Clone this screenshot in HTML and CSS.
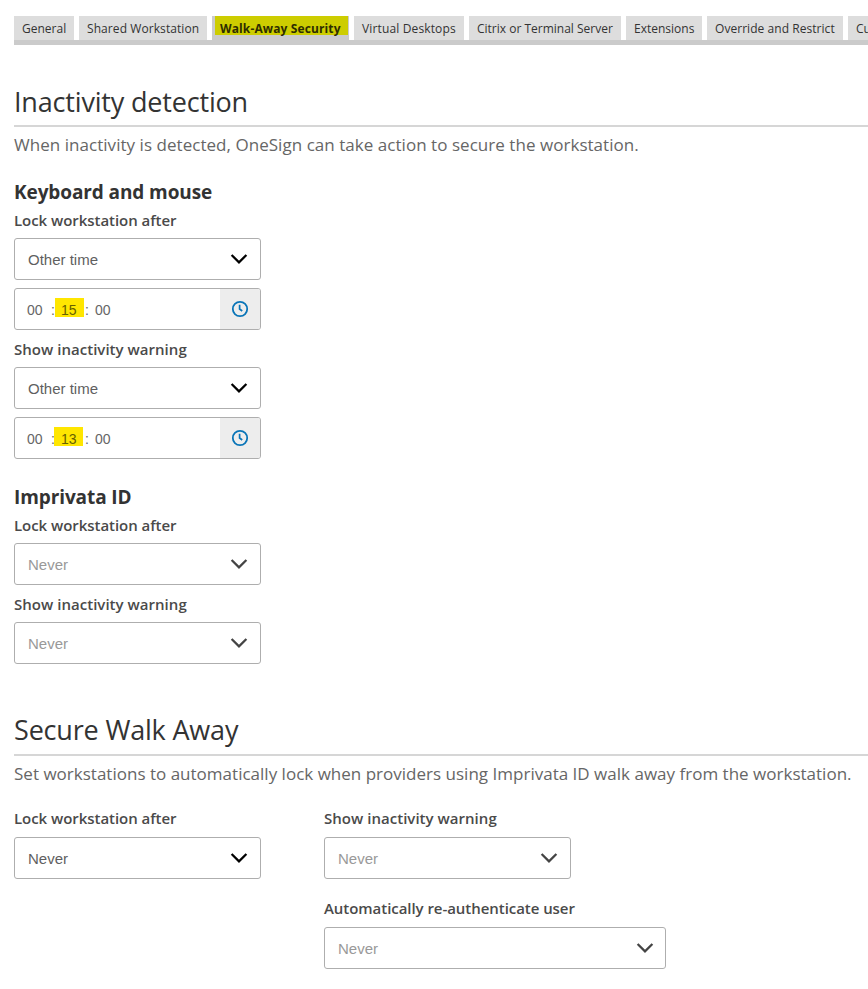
FILE: index.html
```html
<!DOCTYPE html>
<html lang="en">
<head>
<meta charset="utf-8">
<title>Walk-Away Security</title>
<link rel="stylesheet" href="styles.css">
</head>
<body>
<svg class="defs" aria-hidden="true">
  <symbol id="chevron" viewBox="0 0 18 12"><path d="M1.6 2 9 9.4 16.4 2" fill="none" stroke="currentColor" stroke-width="2.3"/></symbol>
  <symbol id="clock" viewBox="0 0 18 18"><circle cx="9" cy="9" r="7.2" fill="none" stroke="currentColor" stroke-width="1.8"/><path d="M8.6 4.8V9l2.6 2" fill="none" stroke="currentColor" stroke-width="1.7"/></symbol>
</svg>
<nav class="tabs">
  <a class="tab general"><span>General</span></a>
  <a class="tab shared"><span>Shared Workstation</span></a>
  <a class="tab active"><span>Walk-Away Security</span></a>
  <a class="tab virtual"><span>Virtual Desktops</span></a>
  <a class="tab citrix"><span>Citrix or Terminal Server</span></a>
  <a class="tab extensions"><span>Extensions</span></a>
  <a class="tab override"><span>Override and Restrict</span></a>
  <a class="tab custom"><span>Customization</span></a>
</nav>
<main>
  <section class="inactivity">
    <h2><span>Inactivity detection</span></h2>
    <p class="intro"><span>When inactivity is detected, OneSign can take action to secure the workstation.</span></p>
    <div class="group">
      <h3><span>Keyboard and mouse</span></h3>
      <label><span>Lock workstation after</span></label>
      <div class="select">Other time<svg class="chevron"><use href="#chevron"/></svg></div>
      <div class="time"><div class="digits"><span class="hh">00</span><span class="sep">:</span><span class="mark">15</span><span class="sep2">:</span><span>00</span></div><div class="addon"><svg class="clock"><use href="#clock"/></svg></div></div>
      <label class="next"><span class="show">Show inactivity warning</span></label>
      <div class="select">Other time<svg class="chevron"><use href="#chevron"/></svg></div>
      <div class="time"><div class="digits"><span class="hh">00</span><span class="sep">:</span><span class="mark early">13</span><span class="sep2">:</span><span>00</span></div><div class="addon"><svg class="clock"><use href="#clock"/></svg></div></div>
    </div>
    <div class="group imprivata">
      <h3><span>Imprivata ID</span></h3>
      <label><span>Lock workstation after</span></label>
      <div class="select disabled">Never<svg class="chevron"><use href="#chevron"/></svg></div>
      <label class="next"><span class="show">Show inactivity warning</span></label>
      <div class="select disabled">Never<svg class="chevron"><use href="#chevron"/></svg></div>
    </div>
  </section>
  <section class="walkaway">
    <h2><span>Secure Walk Away</span></h2>
    <p><span>Set workstations to automatically lock when providers using Imprivata ID walk away from the workstation.</span></p>
    <div class="columns">
      <div>
        <label class="spaced"><span>Lock workstation after</span></label>
        <div class="select">Never<svg class="chevron"><use href="#chevron"/></svg></div>
      </div>
      <div>
        <label class="spaced"><span class="show">Show inactivity warning</span></label>
        <div class="select disabled">Never<svg class="chevron"><use href="#chevron"/></svg></div>
        <label class="reauth"><span>Automatically re-authenticate user</span></label>
        <div class="select disabled wide">Never<svg class="chevron"><use href="#chevron"/></svg></div>
      </div>
    </div>
  </section>
</main>
</body>
</html>
```
FILE: styles.css
```css
* { box-sizing: border-box; }
body { margin: 0; padding-top: 16px; height: 989px; overflow: hidden; background: #fff; color: #333; font-family: "Open Sans", "Noto Sans", sans-serif; }
.defs { display: none; }
.tabs { display: flex; gap: 5px; margin-left: 14px; height: 29px; border-bottom: 5px solid #cbcbcb; overflow: hidden; }
.tab { flex: none; height: 24px; padding-left: 8px; background: #ddd; color: #333; font-size: 12px; line-height: 25px; white-space: nowrap; }
.general { width: 60px; }
.shared { width: 128px; letter-spacing: 0.08px; }
.active { width: 137px; padding-left: 3px; background: #cbcbcb; color: #2d2d00; font-weight: 700; letter-spacing: 0.12px; }
.active span { display: block; width: 133px; height: 19px; padding-left: 5px; background: #cdcd00; }
.virtual { width: 110px; letter-spacing: 0.14px; }
.citrix { width: 152px; }
.extensions { width: 76px; }
.override { width: 136px; letter-spacing: 0.05px; }
.custom { width: 100px; }
main { margin-left: 14px; }
h2, h3, p { margin: 0; white-space: nowrap; }
h2 { height: 49px; border-bottom: 2px solid #d6d6d6; font-size: 27px; font-weight: 400; line-height: 47px; letter-spacing: -0.18px; }
.inactivity h2 { margin-top: 33px; }
.walkaway h2 { margin-top: 43px; line-height: 46px; }
p { height: 36px; color: #666; font-size: 17px; line-height: 36px; letter-spacing: 0.01px; }
p.intro { letter-spacing: 0.04px; }
.group { margin-top: 15px; }
h3 { height: 28px; font-size: 19px; font-weight: 700; line-height: 28px; letter-spacing: -0.1px; }
.imprivata { margin-top: 24px; }
label { display: block; height: 32px; color: #4a4a4a; font-size: 15px; font-weight: 600; line-height: 28px; letter-spacing: -0.05px; white-space: nowrap; }
.show { letter-spacing: 0.03px; }
label.next { margin-top: 5px; }
label.spaced { height: 33px; }
label.reauth { margin-top: 15px; height: 33px; }
.select, .time { display: flex; align-items: center; width: 247px; height: 42px; border: 1px solid #aeaeae; border-radius: 3px; font-family: "Liberation Sans", Arial, sans-serif; color: #666; }
.select { justify-content: space-between; padding: 1px 12px 0 13px; color: #5f5f5f; font-size: 15px; }
.select.wide { width: 342px; padding-right: 11px; }
.select.disabled { color: #999; }
.chevron { width: 18px; height: 12px; margin-bottom: 2px; color: #000; }
.disabled .chevron { color: #444; }
.time { margin-top: 8px; overflow: hidden; font-size: 14px; }
.digits { display: flex; flex: 1; align-items: center; padding: 1px 0 0 12px; }
.hh { width: 24px; }
.sep { width: 4px; }
.mark { width: 29px; height: 19px; margin-top: -5px; padding: 4px 0 0 6px; background: #ffe600; color: #666000; line-height: 16px; }
.mark.early { margin-left: -1px; margin-right: 1px; padding-left: 7px; }
.sep2 { width: 11px; padding-left: 1px; }
.addon { display: flex; align-items: center; justify-content: center; width: 40px; height: 40px; background: #ededed; }
.clock { width: 18px; height: 18px; color: #0a75b8; }
.columns { display: grid; grid-template-columns: 310px 1fr; margin-top: 12px; }
```
